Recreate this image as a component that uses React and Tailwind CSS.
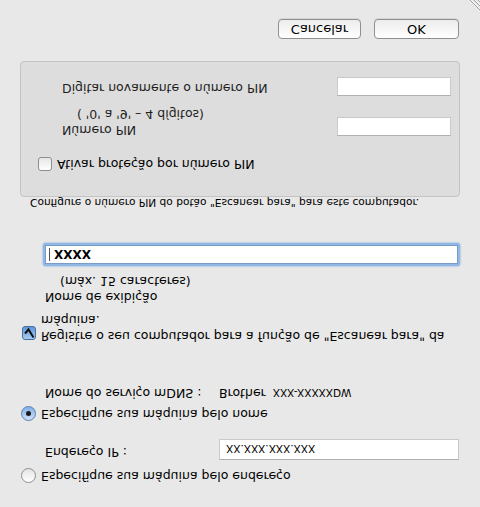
import React from "react";

const font = { fontFamily: '"DejaVu Sans", "Liberation Sans", sans-serif' };

function Radio({ on }) {
  return (
    <span
      className={`inline-flex items-center justify-center w-[15px] h-[15px] rounded-full border shrink-0 ${
        on
          ? "border-[#5a7fb0] bg-gradient-to-b from-[#cfe2f7] to-[#7fb0e6]"
          : "border-[#8e8e8e] bg-gradient-to-b from-white to-[#e4e4e4]"
      }`}
    >
      {on && <span className="w-[5px] h-[5px] rounded-full bg-[#1a1a1a]" />}
    </span>
  );
}

function Check({ on }) {
  return (
    <span
      className={`inline-flex items-center justify-center w-[14px] h-[14px] rounded-[3px] border shrink-0 ${
        on
          ? "border-[#4a6e9e] bg-gradient-to-b from-[#a9cdf2] to-[#5d96d6]"
          : "border-[#8e8e8e] bg-gradient-to-b from-white to-[#e6e6e6]"
      }`}
    >
      {on && (
        <svg width="12" height="12" viewBox="0 0 12 12">
          <path d="M2 5.5 L5.5 9.5 L10.5 1.5" fill="none" stroke="#111" strokeWidth="2" strokeLinejoin="miter" />
        </svg>
      )}
    </span>
  );
}

function Field({ className, children }) {
  return (
    <div
      className={`bg-white border border-[#c9c9c9] border-t-[#b0b0b0] flex items-center px-[6px] text-[10.5px] ${className}`}
    >
      {children}
    </div>
  );
}

function Button({ w, children }) {
  return (
    <div
      className={`${w} h-[20px] rounded-[4px] border border-[#8f8f8f] bg-gradient-to-b from-white to-[#ececec] flex items-center justify-center text-[13px] text-black shadow-[0_1px_0_rgba(0,0,0,0.08)]`}
    >
      {children}
    </div>
  );
}

export default function App() {
  return (
    <div
      style={font}
      className="relative w-[480px] h-[507px] overflow-hidden bg-[#e8e8e8] text-[12.5px] leading-[16px] text-black -scale-y-100"
    >
      {/* by address */}
      <div className="pt-[23px] pl-[21px] flex items-center gap-[5px] h-[39px]">
        <Radio />
        <span>Especifique sua máquina pelo endereço</span>
      </div>

      <div className="mt-[8px] flex items-start h-[21px]">
        <span className="pl-[45px] w-[219px]">Endereço IP :</span>
        <Field className="w-[240px] h-[21px]">XX.XXX.XXX.XXX</Field>
      </div>

      {/* by name */}
      <div className="mt-[17px] pl-[21px] flex items-center gap-[5px] h-[16px]">
        <Radio on />
        <span>Especifique sua máquina pelo nome</span>
      </div>

      <div className="mt-[5px] flex items-center h-[16px]">
        <span className="pl-[45px] w-[219px]">Nome do serviço mDNS :</span>
        <span>
          Brother <span className="ml-[3px] text-[10.5px]">XXX-XXXXXDW</span>
        </span>
      </div>

      {/* register */}
      <div className="mt-[41px] pl-[22px] flex items-start gap-[5px]">
        <span className="mt-[4px] flex">
          <Check on />
        </span>
        <span className="w-[405px]">
          Registre o seu computador para a função de "Escanear para" da máquina.
        </span>
      </div>

      <div className="mt-[7px] pl-[45px]">Nome de exibição</div>
      <div className="pl-[60px]">(máx. 15 caracteres)</div>

      <div className="mt-[7px] ml-[43px] w-[417px] h-[23px] rounded-[3px] p-[2px] bg-[#8fb8e6] shadow-[0_0_2px_#5f98d8]">
        <div className="h-full bg-white border border-[#7a9cc4] flex items-center pl-[3px] text-[12px] font-bold">
          <span className="w-px h-[13px] bg-[#555] mr-[4px]" />
          XXXX
        </div>
      </div>

      <div className="mt-[33px] pl-[30px] text-[10.6px] leading-[14px]">
        Configure o número PIN do botão "Escanear para" para este computador.
      </div>

      {/* PIN group */}
      <div className="mt-[-1px] ml-[20px] w-[440px] h-[136px] rounded-[4px] border border-[#c4c4c4] bg-[#dddddd] pt-[24px] text-[#1e1e1e]">
        <div className="pl-[17px] flex items-center gap-[5px] h-[16px] text-black">
          <Check />
          <span>Ativar proteção por número PIN</span>
        </div>

        <div className="mt-[18px] flex items-start">
          <div className="pl-[41px] w-[316px]">
            <div>Número PIN</div>
            <div className="pl-[15px]">( '0' a '9' – 4 dígitos)</div>
          </div>
          <Field className="mt-[2px] w-[114px] h-[19px]" />
        </div>

        <div className="mt-[10px] flex items-start">
          <div className="pl-[41px] w-[316px]">Digitar novamente o número PIN</div>
          <Field className="w-[114px] h-[19px]" />
        </div>
      </div>

      {/* buttons */}
      <div className="mt-[22px] flex justify-end pr-[21px] gap-[13px]">
        <Button w="w-[83px]">Cancelar</Button>
        <Button w="w-[85px]">OK</Button>
      </div>

      {/* resize grip */}
      <svg className="absolute right-0 bottom-0" width="12" height="12" viewBox="0 0 12 12">
        <path d="M2 12 L12 2 M6 12 L12 6 M10 12 L12 10" stroke="#9a9a9a" strokeWidth="1" />
        <path d="M3 12 L12 3 M7 12 L12 7 M11 12 L12 11" stroke="#ffffff" strokeWidth="1" />
      </svg>
    </div>
  );
}
